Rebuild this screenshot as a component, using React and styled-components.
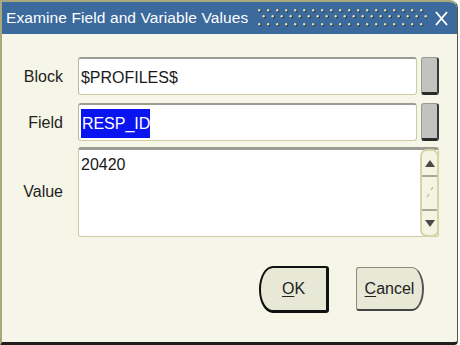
import React from 'react';
import styled, { createGlobalStyle } from 'styled-components';

const Global = createGlobalStyle`
	html, body {
		margin: 0;
		padding: 0;
		background: #ffffff;
	}
	body {
		font-family: 'Liberation Sans', Arial, sans-serif;
	}
`;

const Window = styled.div`
	box-sizing: border-box;
	width: 458px;
	height: 345px;
	background: #f6f6e8;
	border-left: 2px solid #a9a77c;
	border-top: 2px solid #a9a77c;
	border-right: 1px solid #55554a;
	border-bottom: 3px solid #1e1e1e;
	border-radius: 0 8px 4px 0;
	display: flex;
	flex-direction: column;
	overflow: hidden;
`;

const TitleBar = styled.div`
	height: 32px;
	background: #3c6a9d;
	display: flex;
	align-items: center;
	padding: 0 6px 0 4px;
	color: #ffffff;
	font-size: 15.5px;
`;

const Title = styled.span`
	white-space: nowrap;
	letter-spacing: 0.1px;
`;

const Grip = styled.svg`
	margin-left: 9px;
	flex: none;
`;

const Close = styled.svg`
	margin-left: auto;
	margin-right: 3px;
	flex: none;
`;

const Body = styled.div`
	flex: 1;
	display: flex;
	flex-direction: column;
	padding: 23px 18px 0 18px;
`;

const Row = styled.div`
	display: flex;
	align-items: center;
	height: ${(p) => p.h}px;
	margin-bottom: ${(p) => p.mb || 0}px;
`;

const Label = styled.div`
	width: 43px;
	text-align: right;
	font-size: 16px;
	color: #222;
	margin-right: 15px;
	padding-top: ${(p) => p.pt || 0}px;
`;

const Input = styled.div`
	box-sizing: border-box;
	width: 340px;
	height: 100%;
	background: #ffffff;
	border: 1px solid #cdcb9f;
	border-top: 2px solid #9c9c94;
	border-left: 1px solid #bab89a;
	border-radius: 3px;
	display: flex;
	align-items: center;
	padding-left: 2px;
	padding-top: 2px;
	font-size: 16px;
	color: #1a1a1a;
`;

const Selected = styled.span`
	background: #0a14f0;
	color: #ffffff;
	padding: 6px 0 5px 1px;
`;

const LovButton = styled.div`
	box-sizing: border-box;
	width: 18px;
	height: 38px;
	margin-left: 4px;
	background: #c2c2c0;
	border: 1px solid #9a9a92;
	border-bottom: 3px solid #2a2a2a;
	border-right: 2px solid #3a3a3a;
	border-radius: 3px;
`;

const TextBox = styled.div`
	box-sizing: border-box;
	width: 361px;
	height: 100%;
	background: #ffffff;
	border: 1px solid #cdcb9f;
	border-top: 3px solid #9c9c94;
	border-radius: 3px;
	display: flex;
`;

const TextArea = styled.div`
	flex: 1;
	padding: 6px 2px;
	font-size: 16px;
	color: #1a1a1a;
`;

const ScrollBar = styled.div`
	box-sizing: border-box;
	width: 19px;
	background: #f4f4e2;
	border: 2px solid #d6d4a8;
	border-radius: 7px;
	display: flex;
	flex-direction: column;
	margin: -1px -1px -1px 0;
`;

const ScrollEnd = styled.div`
	height: ${(p) => p.h}px;
	display: flex;
	align-items: center;
	justify-content: center;
	border-${(p) => p.side}: 2px solid #a8a898;
`;

const Track = styled.div`
	flex: 1;
	display: flex;
	align-items: center;
	justify-content: center;
`;

const Buttons = styled.div`
	display: flex;
	justify-content: flex-end;
	gap: 27px;
	margin-top: 29px;
	padding-right: 15px;
`;

const Button = styled.div`
	box-sizing: border-box;
	display: flex;
	align-items: center;
	justify-content: center;
	width: ${(p) => p.w}px;
	height: ${(p) => p.h}px;
	background: #e8e8d6;
	font-size: 16px;
	color: #222;
	border: ${(p) => (p.primary ? '2px solid #111' : '1px solid #8a8a80')};
	border-right: ${(p) => (p.primary ? '3px solid #111' : '2px solid #555')};
	border-bottom: ${(p) => (p.primary ? '3px solid #111' : '2px solid #444')};
	border-radius: ${(p) =>
		p.primary ? '14px 3px 3px 14px / 23px 3px 3px 23px' : '3px 12px 12px 3px / 3px 22px 22px 3px'};
	margin-top: ${(p) => p.mt || 0}px;
`;

const Key = styled.span`
	text-decoration: underline;
	text-underline-offset: 2px;
`;

const GripDots = () => (
	<Grip width="170" height="22" viewBox="0 0 170 22">
		<defs>
			<pattern id="dots" width="9" height="22" patternUnits="userSpaceOnUse">
				<circle cx="3" cy="4" r="1.4" fill="#1c2c44" />
				<circle cx="2.2" cy="3.2" r="1.2" fill="#e4e2b0" />
				<circle cx="7.5" cy="10" r="1.4" fill="#1c2c44" />
				<circle cx="6.7" cy="9.2" r="1.2" fill="#e4e2b0" />
				<circle cx="3" cy="18" r="1.4" fill="#1c2c44" />
				<circle cx="2.2" cy="17.2" r="1.2" fill="#e4e2b0" />
			</pattern>
		</defs>
		<rect width="170" height="22" fill="url(#dots)" />
	</Grip>
);

const App = () => (
	<>
		<Global />
		<Window>
			<TitleBar>
				<Title>Examine Field and Variable Values</Title>
				<GripDots />
				<Close width="13" height="15" viewBox="0 0 13 15">
					<path d="M1 1 L12 14 M12 1 L1 14" stroke="#ffffff" strokeWidth="1.9" />
				</Close>
			</TitleBar>
			<Body>
				<Row h={38} mb={8}>
					<Label pt={2}>Block</Label>
					<Input>$PROFILES$</Input>
					<LovButton />
				</Row>
				<Row h={38} mb={6}>
					<Label pt={2}>Field</Label>
					<Input>
						<Selected>RESP_ID</Selected>
					</Input>
					<LovButton />
				</Row>
				<Row h={90}>
					<Label>Value</Label>
					<TextBox>
						<TextArea>20420</TextArea>
						<ScrollBar>
							<ScrollEnd h={24} side="bottom">
								<svg width="10" height="7" viewBox="0 0 10 7">
									<path d="M5 0 L10 7 L0 7 Z" fill="#4a4a4a" />
								</svg>
							</ScrollEnd>
							<Track>
								<svg width="8" height="14" viewBox="0 0 8 14">
									<path d="M7 1 L5 4 M3 8 L1 11" stroke="#b8b68c" strokeWidth="1.2" />
								</svg>
							</Track>
							<ScrollEnd h={24} side="top">
								<svg width="10" height="7" viewBox="0 0 10 7">
									<path d="M0 0 L10 0 L5 7 Z" fill="#4a4a4a" />
								</svg>
							</ScrollEnd>
						</ScrollBar>
					</TextBox>
				</Row>
				<Buttons>
					<Button primary w={70} h={47}>
						<Key>O</Key>K
					</Button>
					<Button w={68} h={44} mt={1}>
						<Key>C</Key>ancel
					</Button>
				</Buttons>
			</Body>
		</Window>
	</>
);

export default App;
